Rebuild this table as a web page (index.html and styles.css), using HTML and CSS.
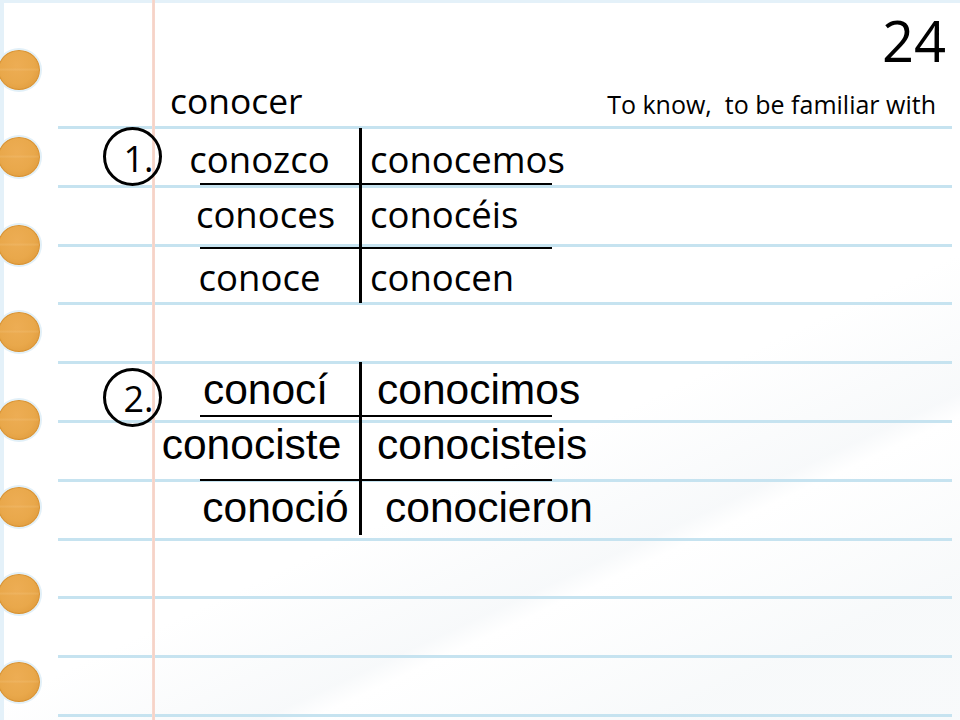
FILE: index.html
```html
<!DOCTYPE html>
<html lang="es">
<head>
<meta charset="utf-8">
<title>conocer</title>
<link rel="stylesheet" href="styles.css">
</head>
<body>
<div class="page">
  <div class="holes">
    <span class="hole"></span>
    <span class="hole"></span>
    <span class="hole"></span>
    <span class="hole"></span>
    <span class="hole"></span>
    <span class="hole"></span>
    <span class="hole"></span>
    <span class="hole"></span>
  </div>
  <div class="sheet">
    <header class="head">
      <div class="slide-no">24</div>
      <div class="sub">
        <span class="verb">conocer</span>
        <span class="meaning">To know,&nbsp; to be familiar with</span>
      </div>
    </header>

    <section class="block block-one">
      <div class="num num-one">1.</div>
      <div class="conj conj-one">
        <div class="cell left row-a">conozco</div>
        <div class="divider"></div>
        <div class="cell right row-a">conocemos</div>
        <div class="rule rule-a"></div>
        <div class="cell left row-b nudge-r6">conoces</div>
        <div class="cell right row-b">conocéis</div>
        <div class="rule rule-b"></div>
        <div class="cell left row-c">conoce</div>
        <div class="cell right row-c">conocen</div>
      </div>
    </section>

    <section class="block block-two">
      <div class="num num-two">2.</div>
      <div class="conj conj-two">
        <div class="cell left row-a nudge-r6">conocí</div>
        <div class="divider"></div>
        <div class="cell right row-a">conocimos</div>
        <div class="rule rule-a"></div>
        <div class="cell left row-b nudge-l8">conociste</div>
        <div class="cell right row-b">conocisteis</div>
        <div class="rule rule-b"></div>
        <div class="cell left row-c nudge-r16">conoció</div>
        <div class="cell right row-c indent-more">conocieron</div>
      </div>
    </section>
  </div>
</div>
</body>
</html>
```

FILE: styles.css
```css
* { box-sizing: border-box; }

html, body {
  margin: 0;
  padding: 0;
  background: #ffffff;
}

.page {
  width: 960px;
  height: 720px;
  overflow: hidden;
  display: flex;
  background:
    linear-gradient(155deg, rgba(255,255,255,0) 60%, rgba(238,242,245,0.45) 72%, rgba(255,255,255,0.3) 74%, rgba(240,244,246,0.5) 88%, rgba(243,246,248,0.6) 100%),
    #ffffff;
  box-shadow: inset 4px 3px 0 #e4f1f9;
  color: #000;
}

/* binder holes */
.holes {
  width: 58px;
  flex: none;
  display: flex;
  flex-direction: column;
  padding-top: 50px;
  gap: 47.4px;
}

.hole {
  display: block;
  width: 42px;
  height: 40px;
  margin-left: -2px;
  border-radius: 50%;
  background:
    linear-gradient(to bottom, rgba(255,255,255,0) 44%, rgba(255,230,190,0.12) 49%, rgba(255,255,255,0) 54%),
    radial-gradient(ellipse at 45% 38%, #edad54 0%, #e9a84b 55%, #dc9637 100%);
  border: 1px solid #d69131;
  box-shadow: 0 0 0 2px #e2f0f8;
}

/* ruled sheet */
.sheet {
  width: 894px;
  flex: none;
  display: flex;
  flex-direction: column;
  background:
    linear-gradient(to right, transparent 94px, #f8dcd2 94px, #f5d0c4 96px, #f8dcd2 97px, transparent 97px),
    repeating-linear-gradient(to bottom, #c6e3f0 0px, #c6e3f0 3px, transparent 3px, transparent 58.8px);
  background-size: 100% 100%, 100% calc(100% - 126px);
  background-position: 0 0, 0 126px;
  background-repeat: no-repeat;
  font-family: "Open Sans", "Noto Sans", sans-serif;
}

.head {
  height: 128px;
  flex: none;
  display: flex;
  flex-direction: column;
}

.slide-no {
  margin-top: 12px;
  font-size: 56px;
  line-height: 56px;
  text-align: right;
  padding-right: 6px;
}

.sub {
  margin-top: 15px;
  display: flex;
  justify-content: space-between;
  align-items: baseline;
  line-height: 1;
}

.verb {
  padding-left: 112px;
  font-size: 35.4px;
}

.meaning {
  padding-right: 16px;
  font-size: 25px;
}

/* conjugation blocks */
.block {
  display: flex;
  align-items: flex-start;
  padding-left: 45px;
  flex: none;
}

.block-two {
  margin-top: 59px;
}

.num {
  width: 59px;
  height: 59px;
  flex: none;
  border: 3px solid #000;
  border-radius: 50%;
  font-size: 36px;
  line-height: 1;
  text-align: center;
  padding-left: 12px;
  position: relative;
  z-index: 1;
}

.num-one {
  margin-top: -1px;
  padding-top: 11px;
}

.num-two {
  margin-top: 6px;
  padding-top: 10px;
}

.conj {
  margin-left: -2px;
  display: grid;
  grid-template-columns: 199px 3px 193px;
  line-height: 1;
  white-space: nowrap;
}

.conj-one {
  grid-template-rows: 55px 2px 62px 2px 54px;
  font-family: "Open Sans", "Noto Sans", sans-serif;
  font-size: 36.5px;
}

.conj-two {
  grid-template-rows: 53px 2px 62px 2px 54px;
  font-family: "Liberation Sans", Arial, sans-serif;
  font-size: 42.5px;
}

.divider {
  grid-column: 2;
  grid-row: 1 / -1;
  background: #000;
}

.rule {
  grid-column: 1 / -1;
  margin-left: 40px;
  margin-right: 3px;
  background: #000;
}

.rule-a { grid-row: 2; }
.rule-b { grid-row: 4; }

.row-a { grid-row: 1; }
.row-b { grid-row: 3; }
.row-c { grid-row: 5; }

.cell.left {
  grid-column: 1;
  text-align: center;
}

.cell.right {
  grid-column: 3;
}

.conj-one .cell.right { padding-left: 8px; }
.conj-two .cell.right { padding-left: 15px; }
.conj-two .cell.right.indent-more { padding-left: 23px; }

.conj-one .row-a { padding-top: 13px; }
.conj-one .row-b { padding-top: 11px; }
.conj-one .row-c { padding-top: 10px; }

.conj-two .row-a { padding-top: 7px; }
.conj-two .row-b { padding-top: 7px; }
.conj-two .row-c { padding-top: 6px; }

.nudge-r6 { padding-left: 12px; }
.nudge-r16 { padding-left: 32px; }
.nudge-l8 { padding-right: 16px; }
```
